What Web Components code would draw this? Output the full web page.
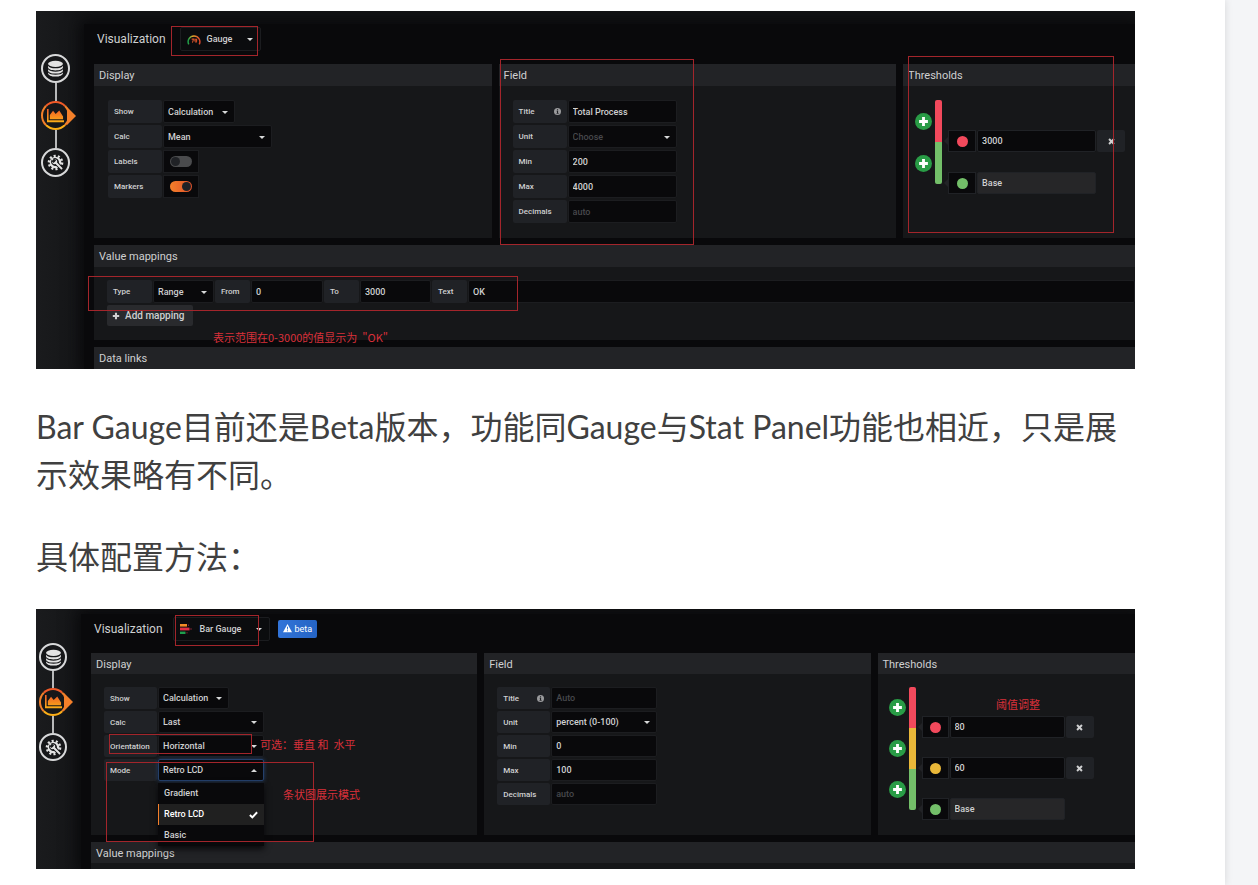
<!DOCTYPE html>
<html lang="zh-CN">
<head>
<meta charset="utf-8">
<title>Bar Gauge</title>
<style>
	body {
		margin: 0;
		background: #f4f5f7;
		font-family: Lato, "Noto Sans CJK SC", sans-serif;
	}

	.small {
		--rail-left: 3px;
		--rail-top: 34px;
		--circle: 28px;
		--link: 17px;
		--inset-top: 5px;
		--inset-left: 45px;
		--head: 39px;
		--picker: 10px;
		--columns: 3fr 3fr 2fr;
		--title: 21px;
		--pad: 13px;
		--pad-bottom: 16px;
		--row: 22px;
		--label: 53px;
		--field: 106px;
		--step: 41px;
		--swatch: 27px;
		--threshold: 115px;
		--remove: 28px;
	}
</style>
</head>
<body>

<article-page>
	<panel-editor>
		<tab-rail slot="rail"></tab-rail>
		<viz-header slot="header" value="Gauge" icon="gauge"></viz-header>
		<option-columns>
			<option-group heading="Display">
				<form-row label="Show" type="select" value="Calculation" style="--field: 72px"></form-row>
				<form-row label="Calc" type="select" value="Mean"></form-row>
				<form-row label="Labels" type="switch"></form-row>
				<form-row label="Markers" type="switch" checked></form-row>
			</option-group>
			<option-group heading="Field">
				<form-row label="Title" info value="Total Process"></form-row>
				<form-row label="Unit" type="select" placeholder="Choose"></form-row>
				<form-row label="Min" value="200"></form-row>
				<form-row label="Max" value="4000"></form-row>
				<form-row label="Decimals" placeholder="auto"></form-row>
			</option-group>
			<option-group heading="Thresholds">
				<threshold-editor steps="#f2495c:3000 #73bf69:Base"></threshold-editor>
			</option-group>
		</option-columns>
		<option-group heading="Value mappings" style="--pad: 13px; --pad-bottom: 14px">
			<value-mapping></value-mapping>
		</option-group>
		<option-group heading="Data links" collapsed></option-group>
		<note-mark slot="notes" style="left: 135px; top: 15px; width: 87px; height: 30px"></note-mark>
		<note-mark slot="notes" style="left: 464px; top: 48px; width: 194px; height: 186px"></note-mark>
		<note-mark slot="notes" style="right: 21px; top: 45px; width: 206px; height: 177px"></note-mark>
		<note-mark slot="notes" style="left: 52px; top: 265px; width: 430px; height: 35px"></note-mark>
		<note-mark slot="notes" plain style="left: 177px; top: 318px">表示范围在0-3000的值显示为&nbsp;&nbsp;"OK"</note-mark>
	</panel-editor>

	<p>Bar Gauge目前还是Beta版本，功能同Gauge与Stat Panel功能也相近，只是展示效果略有不同。</p>
	<p>具体配置方法：</p>

	<panel-editor class="small">
		<tab-rail slot="rail"></tab-rail>
		<viz-header slot="header" value="Bar Gauge" icon="bars" beta></viz-header>
		<option-columns>
			<option-group heading="Display">
				<form-row label="Show" type="select" value="Calculation" style="--field: 71px"></form-row>
				<form-row label="Calc" type="select" value="Last"></form-row>
				<form-row label="Orientation" type="select" value="Horizontal"></form-row>
				<form-row label="Mode" type="select" value="Retro LCD" menu="Gradient|Retro LCD|Basic"></form-row>
			</option-group>
			<option-group heading="Field">
				<form-row label="Title" info placeholder="Auto"></form-row>
				<form-row label="Unit" type="select" value="percent (0-100)"></form-row>
				<form-row label="Min" value="0"></form-row>
				<form-row label="Max" value="100"></form-row>
				<form-row label="Decimals" placeholder="auto"></form-row>
			</option-group>
			<option-group heading="Thresholds">
				<threshold-editor steps="#f2495c:80 #eab839:60 #73bf69:Base"></threshold-editor>
			</option-group>
		</option-columns>
		<option-group heading="Value mappings" peek></option-group>
		<note-mark slot="notes" style="left: 139px; top: 6px; width: 84px; height: 31px"></note-mark>
		<note-mark slot="notes" style="left: 73px; top: 125px; width: 143px; height: 20px"></note-mark>
		<note-mark slot="notes" style="left: 70px; top: 153px; width: 208px; height: 80px"></note-mark>
		<note-mark slot="notes" plain style="left: 224px; top: 127px">可选：垂直 和&nbsp; 水平</note-mark>
		<note-mark slot="notes" plain style="left: 247px; top: 177px">条状图展示模式</note-mark>
		<note-mark slot="notes" plain style="right: 95px; top: 87px">阈值调整</note-mark>
	</panel-editor>
</article-page>

<script>
const ICONS = {
	database: `<svg viewBox="0 0 16 16"><g fill="#e3e3e3"><ellipse cx="8" cy="3.6" rx="7" ry="2.9"/><path d="M1 5.3c1 1.7 3.7 2.5 7 2.5s6-.8 7-2.5v1.6c0 1.7-3 3-7 3s-7-1.3-7-3Z"/><path d="M1 8.7c1 1.6 3.7 2.3 7 2.3s6-.7 7-2.3v1.1c0 1.7-3 3-7 3s-7-1.3-7-3Z"/><path d="M1 11.7c1 1.5 3.7 2.1 7 2.1s6-.6 7-2.1v.7c0 1.7-3 3.2-7 3.2s-7-1.5-7-3.2Z"/></g></svg>`,
	chart: `<svg viewBox="0 0 18 16"><defs><linearGradient id="g" x2="0" y2="1"><stop stop-color="#f05a28"/><stop offset="1" stop-color="#fbae17"/></linearGradient></defs><path fill="url(#g)" d="M0 1h1.7v12H18v2H0ZM3 12V7.5L6.4 3l2.8 3.4L13 2.6 17 9v3Z"/></svg>`,
	gear: `<svg viewBox="0 0 18 18"><circle cx="9" cy="9" r="7" fill="none" stroke="#e3e3e3" stroke-width="2.6" stroke-dasharray="2.2 2.2"/><circle cx="9" cy="9" r="6.2" fill="#e3e3e3"/><circle cx="9" cy="9" r="3.6" fill="#161719"/><path fill="#e3e3e3" stroke="#161719" stroke-width="1.1" d="M5.2 6.9 7 8.7 8.800 7 7 5.200c2.300-1 5 .8 4.300 3.700l5.400 5.600c1 1.400-1 3.300-2.300 2.100L8.900 11.100C6.200 12 4.100 9.500 5.200 6.900Z"/></svg>`,
	gauge: `<svg viewBox="0 0 16 14"><defs><linearGradient id="r"><stop stop-color="#15a04a"/><stop offset=".4" stop-color="#e9a62a"/><stop offset="1" stop-color="#d9432b"/></linearGradient></defs><path fill="none" stroke="url(#r)" stroke-width="1.7" d="M2 13A6.700 6.700 0 1 1 14 13"/><path fill="none" stroke="#d9532b" stroke-width="1.200" d="M5.300 7H7.500L6.200 11M9 7.200h2v2H9zM11 9l-1 2.200"/></svg>`,
	bars: `<svg viewBox="0 0 14 12"><path fill="#f28b26" d="M0 1h7v2.600H0z"/><path fill="#e02f44" d="M0 4.600h9.500v2.800H0z"/><path fill="#1f9d4d" d="M0 8.600h5.500V11H0z"/><path fill="#7b2130" d="M8 1.500h1v1.600H8zM10.500 5h1v2h-1zM6.500 9h1v1.600h-1z"/></svg>`,
	info: `<svg viewBox="0 0 8 8"><circle cx="4" cy="4" r="4" fill="#9a9b9d"/><path fill="#202226" d="M3.400 1.300h1.300v1.200H3.400zM3 3.200h1.700v2.600h.6v.8H2.900v-.8h.5V4H3z"/></svg>`,
	warning: `<svg viewBox="0 0 12 11"><path fill="#fff" d="M6 0 12 11H0Z"/><path fill="#2f6fce" d="M5.300 3.600h1.400L6.500 7.300h-1zM5.400 8.200h1.200v1.300H5.400z"/></svg>`,
	plus: `<svg viewBox="0 0 10 10"><path fill="currentColor" d="M3.700 1h2.600v2.700H9v2.600H6.300V9H3.700V6.300H1V3.700h2.700Z"/></svg>`,
	cross: `<svg viewBox="0 0 10 10"><path fill="none" stroke="currentColor" stroke-width="2.800" d="m1.500 1.500 7 7m0-7-7 7"/></svg>`,
	check: `<svg viewBox="0 0 10 10"><path fill="none" stroke="currentColor" stroke-width="2.200" d="m1 5.500 2.700 2.700L9 2.500"/></svg>`,
};

const BASE = `
	:host {
		display: block;
		box-sizing: border-box;
	}

	*, *::before, *::after {
		box-sizing: border-box;
	}

	svg {
		display: block;
		width: 100%;
	}

	button, input, select {
		margin: 0;
		border: none;
		font: inherit;
		color: inherit;
		appearance: none;
	}

	.caret::after {
		content: "";
		position: absolute;
		right: 7px;
		top: calc(50% - 1px);
		border: 3px solid transparent;
		border-top-color: #d8d9da;
		border-bottom: none;
		pointer-events: none;
	}
`;

class BaseElement extends HTMLElement {

	connectedCallback () {
		if (this.shadowRoot) return;

		this.attachShadow({ mode: 'open' });
		this.shadowRoot.innerHTML = `<style>${BASE}${this.styles()}</style>${this.render()}`;
	}

	attr (name) {
		return this.getAttribute(name) || '';
	}

}

customElements.define('article-page', class extends BaseElement {

	styles () {
		return `
			:host {
				min-height: 100vh;
				margin-right: 33px;
				padding: 11px 90px 16px 36px;
				background: #fff;
				box-shadow: 0 0 8px rgba(0,0,0,.12);
			}

			::slotted(p) {
				margin: 34px 0 28px;
				color: #404040;
				font-size: 32px;
				line-height: 48px;
			}
		`;
	}

	render () {
		return '<slot></slot>';
	}

});

customElements.define('panel-editor', class extends BaseElement {

	styles () {
		return `
			:host {
				position: relative;
				display: flex;
				overflow: hidden;
				background: linear-gradient(90deg, #1a1b1d, #131416 60px);
				color: #cfd0d1;
				font-family: Roboto, "Noto Sans CJK SC", sans-serif;
				font-size: 9px;
				font-weight: 500;
			}

			.rail {
				flex: none;
				width: var(--inset-left, 48px);
			}

			main {
				flex: 1;
				min-width: 0;
				display: flex;
				flex-direction: column;
				gap: 7px;
				margin-top: var(--inset-top, 13px);
				padding-left: 10px;
				background: #09090b;
				box-shadow: 0 0 14px 4px #09090b;
			}

			.top {
				margin-bottom: -7px;
			}
		`;
	}

	render () {
		return `
			<div class="rail"><slot name="rail"></slot></div>
			<main>
				<div class="top"><slot name="header"></slot></div>
				<slot></slot>
			</main>
			<slot name="notes"></slot>
		`;
	}

});

customElements.define('tab-rail', class extends BaseElement {

	styles () {
		return `
			:host {
				position: relative;
				z-index: 1;
				display: flex;
				flex-direction: column;
				padding: var(--rail-top, 43px) 0 0 var(--rail-left, 5px);
			}

			button {
				position: relative;
				display: grid;
				place-items: center;
				width: var(--circle, 29px);
				height: var(--circle, 29px);
				padding: 0;
				border: 2px solid #d8d9da;
				border-radius: 50%;
				background: #161719;
			}

			button + button {
				margin-top: var(--link, 18px);
			}

			button + button::before {
				content: "";
				position: absolute;
				bottom: 100%;
				left: 50%;
				width: 2px;
				height: var(--link, 18px);
				margin: 0 0 2px -1px;
				background: #b8b9ba;
			}

			.active {
				border-color: #f05a28 #f4802a #fbae17;
			}

			.active::after {
				content: "";
				position: absolute;
				left: calc(100% - 1px);
				border: 9px solid transparent;
				border-left: 9px solid #f4802a;
				border-right: none;
			}

			svg {
				width: 17px;
			}
		`;
	}

	render () {
		return `
			<button type="button" aria-label="Queries">${ICONS.database}</button>
			<button type="button" class="active" aria-label="Visualization">${ICONS.chart}</button>
			<button type="button" aria-label="General">${ICONS.gear}</button>
		`;
	}

});

customElements.define('viz-header', class extends BaseElement {

	styles () {
		return `
			:host {
				display: flex;
				align-items: center;
				height: var(--head, 40px);
				padding: 0 0 10px 3px;
			}

			.title {
				font-size: 12px;
				font-weight: 400;
			}

			button {
				position: relative;
				display: flex;
				align-items: center;
				gap: 6px;
				height: 24px;
				margin-left: var(--picker, 14px);
				padding: 0 28px 0 6px;
				border: 1px solid #1b1c1f;
				border-radius: 2px;
				background: #0b0c0e;
			}

			button svg {
				width: 14px;
			}

			.badge {
				display: flex;
				align-items: center;
				gap: 2px;
				height: 18px;
				margin-left: 8px;
				padding: 0 5px;
				border-radius: 2px;
				background: linear-gradient(90deg, #3274d9, #2564c4);
				color: #fff;
				font-weight: 400;
			}

			.badge svg {
				width: 9px;
			}
		`;
	}

	render () {
		return `
			<span class="title">Visualization</span>
			<button type="button" class="caret">${ICONS[this.attr('icon')]}${this.attr('value')}</button>
			${this.hasAttribute('beta') ? `<span class="badge">${ICONS.warning}beta</span>` : ''}
		`;
	}

});

customElements.define('option-columns', class extends BaseElement {

	styles () {
		return `
			:host {
				display: grid;
				grid-template-columns: var(--columns, 12fr 12fr 7fr);
				gap: 7px;
			}
		`;
	}

	render () {
		return '<slot></slot>';
	}

});

customElements.define('option-group', class extends BaseElement {

	styles () {
		return `
			:host {
				min-width: 0;
				background: #161719;
				border-radius: 2px 2px 0 0;
			}

			h4 {
				height: var(--title, 22px);
				margin: 0;
				padding: 1px 0 0 5px;
				background: #222326;
				font-size: 11px;
				font-weight: 400;
				line-height: var(--title, 22px);
			}

			.body {
				display: flex;
				flex-direction: column;
				gap: 2px;
				padding: var(--pad, 14px) 0 var(--pad-bottom, 15px) var(--pad, 14px);
			}

			:host([collapsed]) .body {
				display: none;
			}

			:host([peek]) .body {
				padding: 0;
				height: 6px;
			}
		`;
	}

	render () {
		return `<h4>${this.attr('heading')}</h4><div class="body"><slot></slot></div>`;
	}

});

const FIELD = `
	label {
		display: flex;
		align-items: center;
		justify-content: space-between;
		flex: none;
		width: var(--label, 54px);
		height: var(--row, 23px);
		padding: 0 6px;
		background: #202226;
		border-radius: 2px;
		font-size: 8px;
	}

	.control {
		position: relative;
		flex: none;
		width: var(--field, 109px);
		height: var(--row, 23px);
	}

	.control > input, select {
		width: 100%;
		height: 100%;
		padding: 0 4px;
		border: 1px solid #1c1d20;
		border-radius: 2px;
		background: #09090b;
	}

	select:invalid, input::placeholder {
		color: #47484b;
	}

	:focus {
		outline: 1px solid #33568f;
	}
`;

customElements.define('form-row', class extends BaseElement {

	styles () {
		return `
			${FIELD}

			:host {
				display: flex;
				gap: 1px;
			}

			label svg {
				width: 7px;
			}

			.switch {
				display: grid;
				place-items: center;
				width: 36px;
				background: #09090b;
				border: 1px solid #1c1d20;
			}

			.switch input {
				display: flex;
				width: 22px;
				height: 11px;
				padding: 0;
				border: none;
				border-radius: 6px;
				background: #4a4b4d;
			}

			.switch input::before {
				content: "";
				width: 9px;
				height: 9px;
				margin: 1px;
				border-radius: 50%;
				background: #202226;
			}

			.switch input:checked {
				justify-content: flex-end;
				background: linear-gradient(90deg, #f4802a, #e0502a);
			}

			.open select {
				border-color: #24406b;
				box-shadow: 0 0 4px #24406b;
			}

			.open.caret::after {
				transform: rotate(180deg);
			}

			ul {
				position: absolute;
				z-index: 2;
				top: 100%;
				left: 0;
				width: 100%;
				margin: 2px 0 0;
				padding: 0;
				background: #09090b;
				box-shadow: 0 3px 6px #09090b;
				list-style: none;
				line-height: 21px;
			}

			li {
				display: flex;
				align-items: center;
				justify-content: space-between;
				padding: 0 6px 0 5px;
				border-left: 1px solid transparent;
			}

			li svg {
				width: 9px;
			}

			[aria-selected=true] {
				border-color: #f4802a;
				background: #202020;
				color: #fff;
			}
		`;
	}

	control () {
		const value = this.attr('value');
		const placeholder = this.attr('placeholder');

		switch (this.attr('type')) {
			case 'select':
				return `<span class="control caret ${this.hasAttribute('menu') ? 'open' : ''}">
					<select id="field" required><option value="${value}">${value || placeholder}</option></select>
					${this.menu(value)}
				</span>`;
			case 'switch':
				return `<span class="control switch"><input id="field" type="checkbox" ${this.hasAttribute('checked') ? 'checked' : ''}></span>`;
			default:
				return `<span class="control"><input id="field" value="${value}" placeholder="${placeholder}"></span>`;
		}
	}

	menu (value) {
		if (!this.hasAttribute('menu')) return '';

		const items = this.attr('menu').split('|').map(item => {
			const selected = item === value;
			return `<li role="option" aria-selected="${selected}">${item}${selected ? ICONS.check : ''}</li>`;
		});

		return `<ul role="listbox">${items.join('')}</ul>`;
	}

	render () {
		return `
			<label for="field">${this.attr('label')}${this.hasAttribute('info') ? ICONS.info : ''}</label>
			${this.control()}
		`;
	}

});

customElements.define('value-mapping', class extends BaseElement {

	styles () {
		return `
			${FIELD}

			.row {
				display: flex;
				gap: 1px;
				margin-bottom: 2px;
			}

			.wide {
				flex: 1;
			}

			button {
				display: flex;
				align-items: center;
				gap: 5px;
				height: 21px;
				padding: 0 8px 0 5px;
				border-radius: 2px;
				background: #292a2d;
				font-size: 10px;
			}

			button svg {
				width: 8px;
			}
		`;
	}

	render () {
		return `
			<div class="row">
				<label for="type" style="--label: 45px">Type</label>
				<span class="control caret" style="--field: 61px"><select id="type"><option>Range</option></select></span>
				<label for="from" style="--label: 35px">From</label>
				<span class="control" style="--field: 72px"><input id="from" value="0"></span>
				<label for="to" style="--label: 35px">To</label>
				<span class="control" style="--field: 71px"><input id="to" value="3000"></span>
				<label for="text" style="--label: 35px">Text</label>
				<span class="control wide"><input id="text" value="OK"></span>
			</div>
			<button type="button">${ICONS.plus}Add mapping</button>
		`;
	}

});

customElements.define('threshold-editor', class extends BaseElement {

	styles () {
		return `
			:host {
				display: flex;
				align-items: flex-start;
				margin: 0 0 -1px -2px;
			}

			.add, .bar {
				display: grid;
				grid-auto-rows: var(--step, 42px);
				align-items: center;
			}

			.add button {
				display: grid;
				place-items: center;
				width: 17px;
				height: 17px;
				padding: 0;
				border-radius: 50%;
				background: #299c46;
				color: #fff;
			}

			.add svg {
				width: 11px;
			}

			.bar {
				overflow: hidden;
				width: 7px;
				margin: 0 6px 0 3px;
				border-radius: 2px;
			}

			.bar i {
				height: 100%;
			}

			.rows {
				display: grid;
				grid-auto-rows: 22px;
				row-gap: calc(var(--step, 42px) - 22px);
				padding-top: calc(var(--step, 42px) - 12px);
			}

			.row {
				position: relative;
				display: flex;
				gap: 1px;
			}

			.row::before {
				content: "";
				position: absolute;
				right: 100%;
				top: 7px;
				border: 4px solid transparent;
				border-right-color: #222326;
				border-left: none;
			}

			.swatch {
				display: grid;
				place-items: center;
				width: var(--swatch, 28px);
				padding: 0;
				border: 1px solid #202226;
				background: #09090b;
			}

			.swatch i {
				width: 11px;
				height: 11px;
				border-radius: 50%;
			}

			input {
				width: var(--threshold, 119px);
				padding: 0 4px;
				border: 1px solid #202226;
				border-radius: 2px;
				background: #09090b;
			}

			input[readonly] {
				background: #262628;
			}

			.remove {
				display: grid;
				place-items: center;
				width: var(--remove, 28px);
				padding: 0;
				border-radius: 2px;
				background: #202226;
			}

			.remove svg {
				width: 7px;
			}
		`;
	}

	render () {
		const steps = this.attr('steps').split(' ').map(step => step.split(':'));

		return `
			<div class="add">${steps.map(() => `<button type="button" aria-label="Add">${ICONS.plus}</button>`).join('')}</div>
			<div class="bar">${steps.map(([color]) => `<i style="background: ${color}"></i>`).join('')}</div>
			<div class="rows">${steps.map(([color, value]) => `
				<div class="row">
					<button type="button" class="swatch" aria-label="Color"><i style="background: ${color}"></i></button>
					<input aria-label="Value" value="${value}" ${value === 'Base' ? 'readonly' : ''}>
					${value === 'Base' ? '' : `<button type="button" class="remove" aria-label="Remove">${ICONS.cross}</button>`}
				</div>`).join('')}
			</div>
		`;
	}

});

customElements.define('note-mark', class extends BaseElement {

	styles () {
		return `
			:host {
				position: absolute;
				z-index: 3;
				border: 1px solid #a3252b;
				color: #d9303a;
				font-family: "Noto Sans CJK SC", sans-serif;
				font-size: 11px;
				font-weight: 400;
				line-height: 16px;
				white-space: nowrap;
				pointer-events: none;
			}

			:host([plain]) {
				border: none;
			}
		`;
	}

	render () {
		return '<slot></slot>';
	}

});
</script>
</body>
</html>
